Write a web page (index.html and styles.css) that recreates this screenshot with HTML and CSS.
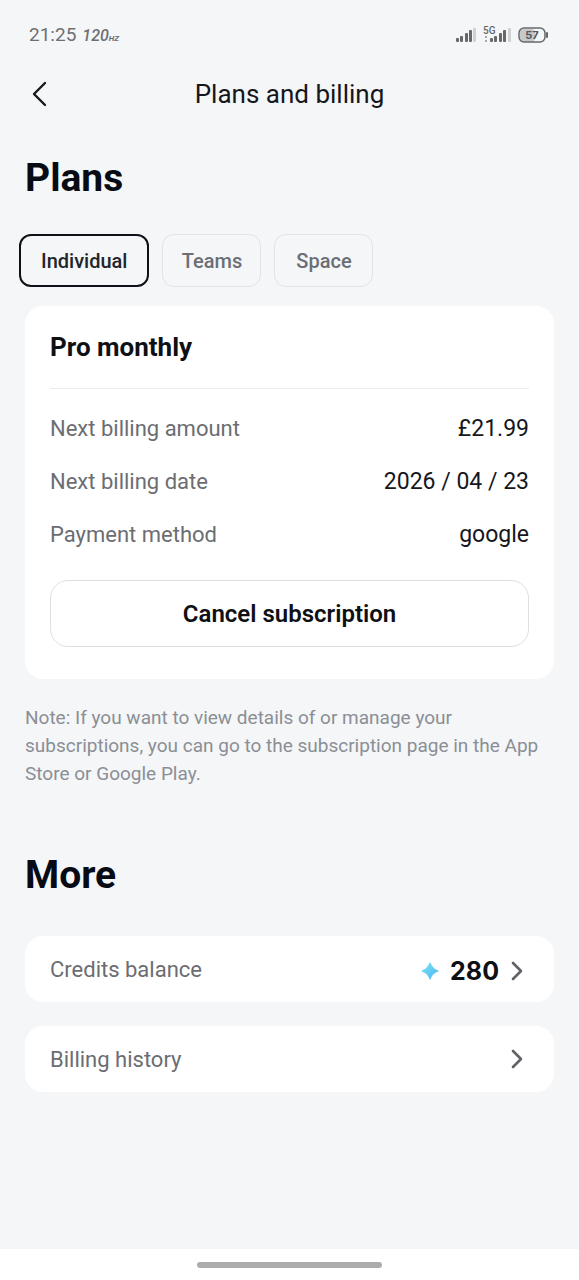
FILE: index.html
```html
<!DOCTYPE html>
<html lang="en">
<head>
<meta charset="utf-8">
<meta name="viewport" content="width=device-width, initial-scale=1">
<title>Plans and billing</title>
<link rel="stylesheet" href="styles.css">
</head>
<body>
<div class="screen">
  <div class="status">
    <div class="status-left"><span class="clock">21:25</span><span class="rate">120<small class="hz">HZ</small></span></div>
    <svg class="status-icons" width="94" height="20" viewBox="0 0 94 20" role="img" aria-label="Signal, 5G, battery 57%">
      <g fill="#66686b">
        <rect x="1" y="13" width="3" height="4" rx="1"/><rect x="5" y="11" width="3" height="6" rx="1"/><rect x="10" y="8" width="3" height="9" rx="1"/><rect x="14" y="5" width="3" height="12" rx="1"/>
        <rect x="35" y="13" width="3" height="4" rx="1"/><rect x="39" y="11" width="3" height="6" rx="1"/><rect x="44" y="8" width="3" height="9" rx="1"/><rect x="48" y="5" width="3" height="12" rx="1"/>
      </g>
      <g fill="#cfd1d4"><rect x="18" y="3" width="3" height="14" rx="1"/><rect x="53" y="3" width="3" height="14" rx="1"/></g>
      <path d="M31 11v2M31 15v2" stroke="#a5a7aa" stroke-width="2"/>
      <text class="net" x="28" y="9">5G</text>
      <rect x="65" y="4" width="15" height="13" rx="4" fill="#c6c8ca"/>
      <rect x="64" y="3" width="26" height="14" rx="5" fill="none" stroke="#66686b" stroke-width="1.5"/>
      <path d="M92 8v4" stroke="#66686b" stroke-width="2" stroke-linecap="round"/>
      <text class="level" x="77" y="14" text-anchor="middle">57</text>
    </svg>
  </div>
  <header class="header">
    <button class="back" type="button" aria-label="Back">
      <svg width="18" height="28" viewBox="0 0 18 28"><path d="M14 3 3 14l11 11" fill="none" stroke="#15171c" stroke-width="2.4" stroke-linecap="round" stroke-linejoin="round"/></svg>
    </button>
    <h1 class="title">Plans and billing</h1>
  </header>
  <main class="main">
    <h2 class="heading">Plans</h2>
    <div class="tabs">
      <button class="tab tab-active" type="button">Individual</button>
      <button class="tab" type="button">Teams</button>
      <button class="tab" type="button">Space</button>
    </div>
    <section class="card">
      <h3 class="plan">Pro monthly</h3>
      <dl class="details">
        <div class="detail"><dt>Next billing amount</dt><dd>£21.99</dd></div>
        <div class="detail"><dt>Next billing date</dt><dd>2026 / 04 / 23</dd></div>
        <div class="detail"><dt>Payment method</dt><dd>google</dd></div>
      </dl>
      <button class="cancel" type="button">Cancel subscription</button>
    </section>
    <p class="note">Note: If you want to view details of or manage your subscriptions, you can go to the subscription page in the App Store or Google Play.</p>
    <h2 class="heading">More</h2>
    <nav class="links">
      <a class="link" href="#credits">
        <span>Credits balance</span>
        <span class="link-end link-value">
          <svg width="18" height="18" viewBox="0 0 18 18"><defs><linearGradient id="spark" x1="0" y1="0" x2="1" y2="1"><stop offset="0" stop-color="#7be0f5"/><stop offset="1" stop-color="#4db8f2"/></linearGradient></defs><path d="M9 1Q11 7 17 9 11 11 9 17 7 11 1 9 7 7 9 1Z" fill="url(#spark)" stroke="url(#spark)" stroke-width="1.2" stroke-linejoin="round"/></svg>
          <span class="credits">280</span>
          <svg class="chevron" width="14" height="22" viewBox="0 0 14 22"><path d="m3 3 8 8-8 8"/></svg>
        </span>
      </a>
      <a class="link" href="#history">
        <span>Billing history</span>
        <span class="link-end"><svg class="chevron" width="14" height="22" viewBox="0 0 14 22"><path d="m3 3 8 8-8 8"/></svg></span>
      </a>
    </nav>
  </main>
  <div class="homebar"><span class="pill"></span></div>
</div>
</body>
</html>
```
FILE: styles.css
```css
* { box-sizing: border-box; }
body {
  margin: 0;
  background: #f4f6f8;
  color: #15171c;
  font-family: Roboto, "Liberation Sans", sans-serif;
}
button { font-family: inherit; cursor: pointer; }
h1, h2, h3, p, dl, dd { margin: 0; }
svg { display: block; flex: none; }
.screen { display: flex; flex-direction: column; min-height: 100vh; }

.status {
  display: flex;
  justify-content: space-between;
  align-items: center;
  height: 69px;
  padding: 0 30px 0 29px;
  color: #6d6f72;
}
.status-left { display: flex; align-items: baseline; gap: 6px; }
.clock { font-size: 19px; }
.rate { font-size: 16px; font-style: italic; font-weight: 500; }
.hz { font-size: 8px; font-weight: 700; }
.net { font: 500 10px Roboto, sans-serif; fill: #66686b; }
.level { font: 700 11px Inter, sans-serif; fill: #55575a; }

.header {
  display: grid;
  grid-template-columns: 48px 1fr 48px;
  align-items: center;
  height: 50px;
  padding: 0 16px;
}
.back { display: flex; justify-content: center; padding: 10px; border: 0; background: none; }
.title { font-size: 26px; line-height: 32px; font-weight: 400; text-align: center; }

.main { flex: 1; padding: 35px 25px; }
.heading { font-size: 39px; line-height: 48px; font-weight: 700; color: #080b14; }
.tabs { display: flex; gap: 13px; margin: 32px 0 19px -6px; }
.tab {
  min-width: 99px;
  height: 53px;
  padding: 0 18px;
  border: 1px solid #e2e3e6;
  border-radius: 12px;
  background: none;
  color: #6b6e75;
  font-size: 20px;
  font-weight: 500;
}
.tab-active { padding: 0 20px; border: 2px solid #0e1118; color: #22252b; }

.card { padding: 25px 25px 32px; border-radius: 18px; background: #fff; }
.plan { padding-bottom: 25px; border-bottom: 1px solid #ebebed; font-size: 26px; line-height: 32px; font-weight: 700; color: #0e1014; }
.details { display: flex; flex-direction: column; gap: 23px; margin: 25px 0 30px; font-size: 23px; line-height: 30px; }
.detail { display: flex; justify-content: space-between; }
.detail dt { font-size: 22px; color: #6b6d72; }
.cancel {
  display: block;
  width: 100%;
  height: 67px;
  border: 1px solid #dfdfe1;
  border-radius: 18px;
  background: #fff;
  color: #0e1014;
  font-size: 24px;
  font-weight: 600;
}
.note { margin: 25px 0 63px; font-size: 20px; line-height: 28px; color: #8b8e95; }
.note { font-size: 19px; }

.links { display: flex; flex-direction: column; gap: 24px; margin-top: 37px; }
.link {
  display: flex;
  justify-content: space-between;
  align-items: center;
  height: 66px;
  padding: 0 30px 0 25px;
  border-radius: 18px;
  background: #fff;
  color: #6b6d72;
  font-size: 22px;
  text-decoration: none;
}
.link-end { display: flex; align-items: center; gap: 11px; }
.link-value { padding-top: 4px; }
.credits { font-family: Inter, sans-serif; font-size: 25px; font-weight: 700; color: #0e1014; }
.chevron { fill: none; stroke: #606267; stroke-width: 2.6; stroke-linecap: round; stroke-linejoin: round; }

.homebar { display: flex; justify-content: center; align-items: center; height: 31px; background: #fff; }
.pill { width: 32%; height: 6px; border-radius: 3px; background: #acacac; }
```
